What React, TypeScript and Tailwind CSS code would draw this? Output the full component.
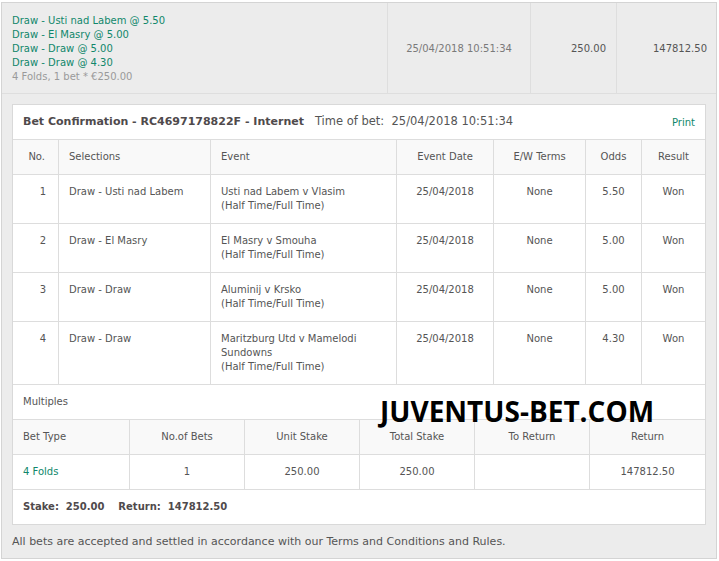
import React from 'react'

const FONT = { fontFamily: '"DejaVu Sans", Verdana, sans-serif' }

const SELECTIONS = [
  { no: 1, sel: 'Draw - Usti nad Labem', event: ['Usti nad Labem v Vlasim'], odds: '5.50' },
  { no: 2, sel: 'Draw - El Masry', event: ['El Masry v Smouha'], odds: '5.00' },
  { no: 3, sel: 'Draw - Draw', event: ['Aluminij v Krsko'], odds: '5.00' },
  { no: 4, sel: 'Draw - Draw', event: ['Maritzburg Utd v Mamelodi', 'Sundowns'], odds: '4.30' },
]

const cell = 'bg-white py-[10px] leading-[14px]'
const head = 'bg-[#f9f9f9] py-[10px] leading-[14px]'

export default function App() {
  return (
    <div className="w-[719px] h-[561px] bg-white text-[10px] text-[#555]" style={FONT}>
      <div className="relative ml-[1px] pt-[2px]">
        <div className="w-[716px] h-[557px] border border-[#d4d4d4] bg-[#ececec]">
          {/* summary row */}
          <div className="flex border-b border-[#dedede] h-[91px]">
            <div className="w-[386px] border-r border-[#dedede] px-[10px] pt-[11px] leading-[14px]">
              <div className="text-[#10876b]">Draw - Usti nad Labem @ 5.50</div>
              <div className="text-[#10876b]">Draw - El Masry @ 5.00</div>
              <div className="text-[#10876b]">Draw - Draw @ 5.00</div>
              <div className="text-[#10876b]">Draw - Draw @ 4.30</div>
              <div className="text-[#9a9a9a]">4 Folds, 1 bet * €250.00</div>
            </div>
            <div className="w-[143px] border-r border-[#dedede] flex items-center justify-center text-[#7a7a7a]">
              25/04/2018 10:51:34
            </div>
            <div className="w-[86px] border-r border-[#dedede] flex items-center justify-end pr-[10px]">250.00</div>
            <div className="flex-1 flex items-center justify-end pr-[9px]">147812.50</div>
          </div>

          <div className="p-[10px]">
            <div className="border border-[#d9d9d9] bg-[#dddddd]">
              {/* panel header */}
              <div className="flex items-center bg-white h-[34px] px-[10px] mb-px">
                <span className="font-bold text-[11px] text-[#4f4a4c]">Bet Confirmation - RC4697178822F - Internet</span>
                <span className="ml-[11px] text-[11.5px] whitespace-pre">Time of bet:  25/04/2018 10:51:34</span>
                <span className="ml-auto text-[#10876b]">Print</span>
              </div>

              {/* selections */}
              <div className="grid grid-cols-[45px_151px_185px_96px_91px_55px_1fr] gap-px">
                <div className={`${head} text-right pr-[13px]`}>No.</div>
                <div className={`${head} pl-[10px]`}>Selections</div>
                <div className={`${head} pl-[10px]`}>Event</div>
                <div className={`${head} text-center`}>Event Date</div>
                <div className={`${head} text-center`}>E/W Terms</div>
                <div className={`${head} text-center`}>Odds</div>
                <div className={`${head} text-center`}>Result</div>
                {SELECTIONS.map((s) => (
                  <React.Fragment key={s.no}>
                    <div className={`${cell} text-right pr-[12px]`}>{s.no}</div>
                    <div className={`${cell} pl-[10px]`}>{s.sel}</div>
                    <div className={`${cell} pl-[10px]`}>
                      {s.event.map((e) => <div key={e}>{e}</div>)}
                      <div>(Half Time/Full Time)</div>
                    </div>
                    <div className={`${cell} text-center`}>25/04/2018</div>
                    <div className={`${cell} text-center`}>None</div>
                    <div className={`${cell} text-center`}>{s.odds}</div>
                    <div className={`${cell} text-center`}>Won</div>
                  </React.Fragment>
                ))}
              </div>

              <div className={`${cell} mt-px pl-[10px]`}>Multiples</div>

              {/* multiples */}
              <div className="grid grid-cols-[116px_114px_114px_114px_114px_1fr] gap-px mt-px">
                <div className={`${head} pl-[10px]`}>Bet Type</div>
                <div className={`${head} text-center`}>No.of Bets</div>
                <div className={`${head} text-center`}>Unit Stake</div>
                <div className={`${head} text-center`}>Total Stake</div>
                <div className={`${head} text-center`}>To Return</div>
                <div className={`${head} text-center`}>Return</div>
                <div className={`${cell} pl-[10px] text-[#10876b]`}>4 Folds</div>
                <div className={`${cell} text-center`}>1</div>
                <div className={`${cell} text-center`}>250.00</div>
                <div className={`${cell} text-center`}>250.00</div>
                <div className={cell}></div>
                <div className={`${cell} text-center`}>147812.50</div>
              </div>

              <div className={`${cell} mt-px pl-[10px] font-bold whitespace-pre text-[#4f4a4c]`}>
                {'Stake:  250.00    Return:  147812.50'}
              </div>
            </div>

            <p className="mt-[10px] leading-[14px] text-[11px]">
              All bets are accepted and settled in accordance with our Terms and Conditions and Rules.
            </p>
          </div>
        </div>

        {/* watermark */}
        <div
          className="absolute left-[379px] top-[393px] text-[28px] leading-[36px] font-bold text-black"
          style={{ fontFamily: '"Open Sans", sans-serif' }}
        >
          JUVENTUS-BET.COM
        </div>
      </div>
    </div>
  )
}
